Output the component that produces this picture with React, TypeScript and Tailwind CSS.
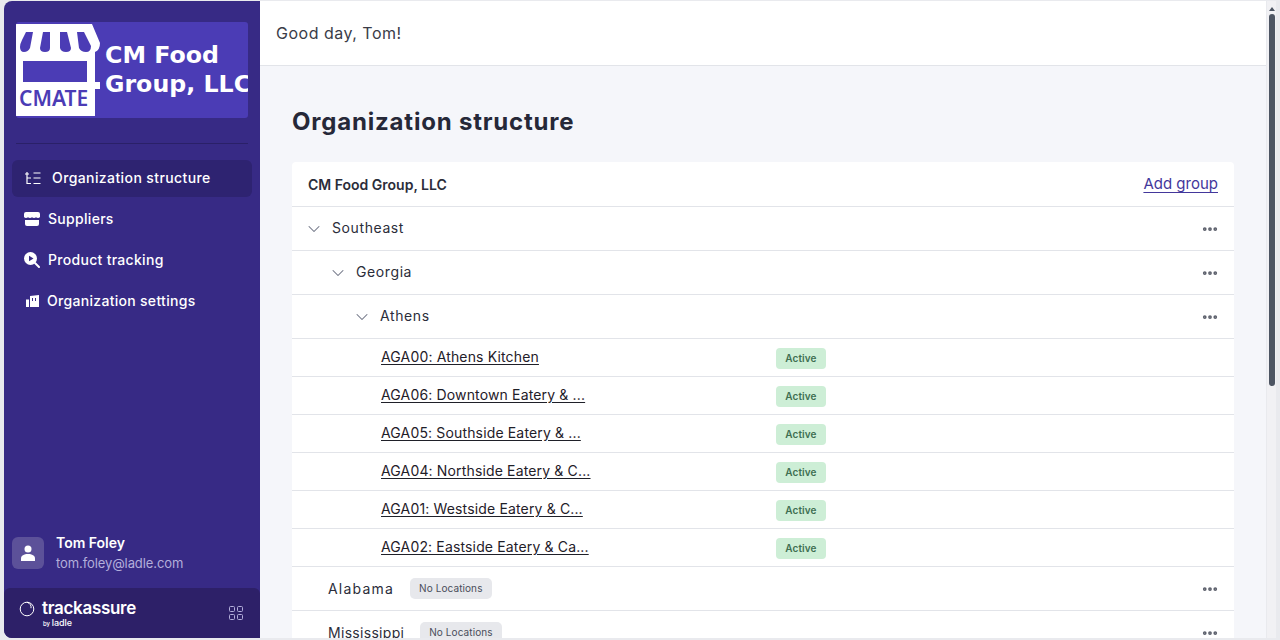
import { ChevronDown, Ellipsis } from "lucide-react";

const locations = [
  "AGA00: Athens Kitchen",
  "AGA06: Downtown Eatery & ...",
  "AGA05: Southside Eatery & ...",
  "AGA04: Northside Eatery & C...",
  "AGA01: Westside Eatery & C...",
  "AGA02: Eastside Eatery & Ca...",
];

const StoreLogo = () => (
  <svg width="84" height="92" viewBox="0 0 84 92" className="shrink-0">
    <path d="M0 0 L76 0 L84 19 Q84 26 79 28 L79 58 L84 58 L84 65 L79 65 L79 92 L0 92 Z" fill="#ffffff" />
    <path d="M10 8 L17 8 L14 24 Q12 28 8 28 Q4 28 4 23 Q4 20 6 16 Z" fill="#4b3cb5" />
    <path d="M27 8 L34 8 L34 24 Q34 28 29 28 Q24 28 24 24 Z" fill="#4b3cb5" />
    <path d="M44 8 L51 8 L55 24 Q55 28 50 28 Q45 28 44 24 Z" fill="#4b3cb5" />
    <path d="M61 8 L68 8 L75 22 Q75 28 70 28 Q65 28 63 24 Z" fill="#4b3cb5" />
    <rect x="7" y="37" width="64" height="21" fill="#4b3cb5" />
    <text x="3" y="82" fontFamily="'Noto Sans', sans-serif" fontWeight="600" fontSize="21" fill="#4b3cb5">
      CMATE
    </text>
  </svg>
);

const TreeIcon = () => (
  <svg width="16" height="13" viewBox="0 0 16 13" fill="none" stroke="#ffffff" strokeWidth="1.2" className="shrink-0">
    <path d="M2 0v11.500h4M2 6h4M0 2h4M8.500 1h7M8.500 6h7M8.500 11.500h7" />
  </svg>
);

const StoreIcon = () => (
  <svg width="16" height="14" viewBox="0 0 16 14" fill="#ffffff" className="shrink-0">
    <path d="M2 0h12a2 2 0 0 1 2 2v3c-1 1.200-2.700 1.200-4 .2-1.200 1-2.800 1-4 0-1.200 1-2.800 1-4 0C2.700 6.200 1 6.200 0 5V2a2 2 0 0 1 2-2z" />
    <path d="M1 8h14v4a2 2 0 0 1-2 2H3a2 2 0 0 1-2-2z" />
  </svg>
);

const TrackingIcon = () => (
  <svg width="16" height="16" viewBox="0 0 16 16" className="shrink-0">
    <circle cx="6.500" cy="6.500" r="6.500" fill="#ffffff" />
    <path d="M5 3.800 9.500 6.500 5 9.200z" fill="#372a85" />
    <path d="M11 11l4 4" stroke="#ffffff" strokeWidth="2" strokeLinecap="round" />
  </svg>
);

const BuildingIcon = () => (
  <svg width="13" height="12" viewBox="0 0 13 12" fill="#ffffff" className="shrink-0">
    <path d="M0 4.500h3V12H0z" />
    <path d="M4 1l9-1v12H4z" />
    <path d="M6 3h1v3H6zM9 3h1v3H9z" fill="#372a85" />
  </svg>
);

const RowMenu = () => <Ellipsis size={18} strokeWidth={3} className="shrink-0 text-[#5b5f6b]" />;

const GroupRow = ({ label, indent }: { label: string; indent: string }) => (
  <div className="flex h-[44px] items-center justify-between border-b border-[#e2e4e9] pr-[15px]">
    <div className={`flex items-center gap-2 ${indent}`}>
      <ChevronDown size={20} strokeWidth={1.25} className="text-[#6b7080]" />
      <span className="mb-[2px] text-[14px] tracking-[0.6px] text-[#2b2d3a]">{label}</span>
    </div>
    <RowMenu />
  </div>
);

const EmptyGroupRow = ({ label, spacing }: { label: string; spacing: string }) => (
  <div className="flex h-[44px] items-center justify-between border-b border-[#e2e4e9] pr-[15px] pl-9">
    <div className="flex items-center gap-4">
      <span className={`text-[14px] text-[#2b2d3a] ${spacing}`}>{label}</span>
      <span className="flex h-[21px] items-center rounded-[5px] bg-[#e7e8ec] px-[9px] text-[10px] tracking-[0.1px] text-[#4a4d5a]">
        No Locations
      </span>
    </div>
    <RowMenu />
  </div>
);

const App = () => {
  return (
    <div className="flex h-[640px] w-[1280px] overflow-hidden bg-[#e9eaee] pt-px pb-[2px] pl-1 font-['Inter','Noto_Sans',sans-serif]">
      <aside className="flex w-[256px] shrink-0 flex-col overflow-hidden rounded-l-[8px] bg-[#372a85] text-white">
        <div className="mt-[21px] ml-3 flex h-[96px] w-[232px] items-center overflow-hidden rounded-[3px] bg-[#4b3cb5]">
          <StoreLogo />
          <div className="ml-[5px] whitespace-nowrap font-['DejaVu_Sans',sans-serif] text-[23.700px] leading-[29px] font-bold">
            CM Food
            <br />
            Group, LLC
          </div>
        </div>
        <div className="mx-3 mt-[25px] h-px bg-[#2a2068]" />
        <nav className="mt-4 flex flex-col px-2 text-[14px] font-medium tracking-[0.3px]">
          <div className="flex h-[37px] items-center gap-3 rounded-[6px] bg-[#2e2371] pl-[13px]">
            <TreeIcon />
            <span className="mb-[2px] -ml-px tracking-[0.4px]">Organization structure</span>
          </div>
          <div className="mt-px flex h-[41px] items-center gap-2 pl-3">
            <StoreIcon />
            <span>Suppliers</span>
          </div>
          <div className="flex h-[41px] items-center gap-2 pl-3">
            <TrackingIcon />
            <span>Product tracking</span>
          </div>
          <div className="flex h-[41px] items-center gap-2 pl-[14px]">
            <BuildingIcon />
            <span>Organization settings</span>
          </div>
        </nav>
        <div className="mt-auto flex items-center gap-3 px-2 pb-[15px]">
          <div className="flex h-8 w-8 items-center justify-center rounded-[6px] bg-[#5c5199]">
            <svg width="14" height="16" viewBox="0 0 14 16" fill="#ffffff">
              <circle cx="7" cy="4" r="3.500" />
              <path d="M0 16v-2.500C0 10.500 3 9 7 9s7 1.500 7 4.500V16z" />
            </svg>
          </div>
          <div className="flex flex-col">
            <span className="text-[14px] leading-5 font-semibold">Tom Foley</span>
            <span className="text-[13px] leading-5 tracking-[-0.1px] text-[#b3aedb]">tom.foley@ladle.com</span>
          </div>
        </div>
        <div className="flex h-[50px] shrink-0 items-center justify-between rounded-t-[6px] bg-[#2d2068] pr-4 pl-[15px]">
          <div className="flex items-start gap-[7px]">
            <svg width="16" height="16" viewBox="0 0 16 16" fill="none" stroke="#ffffff" strokeWidth="1" className="mt-[3px]">
              <circle cx="8" cy="8" r="6.800" />
              <path d="M8 1.200c3 1 4.500 3.500 4 6" />
            </svg>
            <div className="flex flex-col">
              <span className="text-[17px] leading-[20px] font-semibold tracking-[-0.3px]">trackassure</span>
              <span className="pl-px text-[9px] leading-[10px] font-medium">
                <span className="text-[6px]">by </span>ladle
              </span>
            </div>
          </div>
          <svg width="16" height="16" viewBox="0 0 16 16" fill="none" stroke="#b3aedb" strokeWidth="1">
            <rect x="1.500" y="1.500" width="5" height="5" rx="1" />
            <rect x="9.500" y="1.500" width="5" height="5" rx="1" />
            <rect x="1.500" y="9.500" width="5" height="5" rx="1" />
            <rect x="9.500" y="9.500" width="5" height="5" rx="1" />
          </svg>
        </div>
      </aside>

      <main className="flex w-[1006px] shrink-0 flex-col overflow-hidden bg-[#f5f6fa]">
        <header className="flex h-[65px] shrink-0 items-center border-b border-[#e2e4e9] bg-white pl-4">
          <span className="text-[16px] tracking-[0.5px] text-[#3a3c48]">Good day, Tom!</span>
        </header>
        <div className="px-8 pt-10">
          <h1 className="text-[24px] leading-8 font-bold tracking-[0.8px] text-[#262838]">Organization structure</h1>
          <div className="mt-6 rounded-t-[4px] bg-white">
            <div className="flex h-[45px] items-center justify-between border-b border-[#e2e4e9] px-4">
              <span className="text-[14px] font-semibold text-[#2b2d3a]">CM Food Group, LLC</span>
              <span className="text-[15px] text-[#43379b] underline underline-offset-[3px]">Add group</span>
            </div>
            <GroupRow label="Southeast" indent="pl-3" />
            <GroupRow label="Georgia" indent="pl-9" />
            <GroupRow label="Athens" indent="pl-[60px]" />
            {locations.map((name) => (
              <div key={name} className="flex h-[38px] items-center border-b border-[#e2e4e9] pl-[89px]">
                <span className="mb-[2px] w-[395px] text-[14px] tracking-[0.15px] text-[#1f2029] underline underline-offset-2">{name}</span>
                <span className="mt-[2px] flex h-[21px] w-[50px] items-center justify-center rounded-[4px] bg-[#cdeed6] text-[10px] font-semibold tracking-[0.1px] text-[#3f6f52]">
                  Active
                </span>
              </div>
            ))}
            <EmptyGroupRow label="Alabama" spacing="tracking-[1.2px]" />
            <EmptyGroupRow label="Mississippi" spacing="tracking-[0.3px]" />
          </div>
        </div>
      </main>

      <div className="ml-px flex w-[9px] shrink-0 flex-col items-center bg-[#f1f1f4]">
        <div className="mt-[6px] h-0 w-0 border-x-[3px] border-b-[4px] border-x-transparent border-b-[#4d5563]" />
        <div className="mt-[3px] h-[372px] w-[6px] rounded-[3px] bg-[#4d5563]" />
      </div>
    </div>
  );
};

export default App;
